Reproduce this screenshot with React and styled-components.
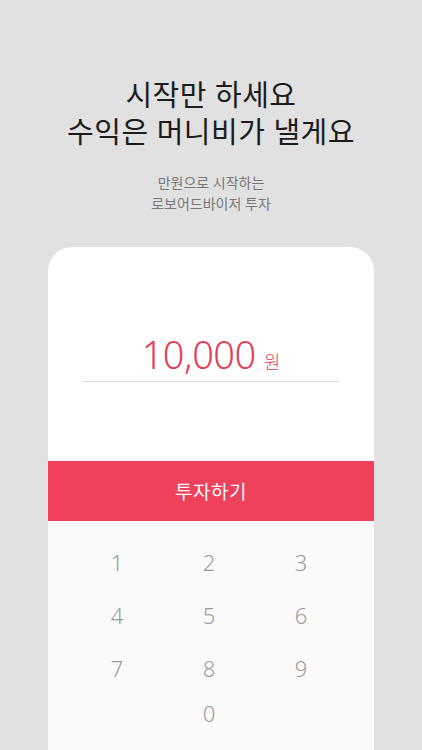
import React from 'react';
import styled, { createGlobalStyle } from 'styled-components';

const GlobalStyle = createGlobalStyle`
  html, body {
    margin: 0;
    padding: 0;
    background: #e1e1e1;
    font-family: "Noto Sans", "Noto Sans CJK KR", sans-serif;
  }
`;

const Screen = styled.div`
  width: 422px;
  height: 750px;
  overflow: hidden;
  background: #e1e1e1;
  display: flex;
  flex-direction: column;
  align-items: center;
`;

const Headline = styled.h1`
  margin: 76px 0 0;
  font-size: 29px;
  font-weight: 400;
  line-height: 37px;
  color: #1c1c1c;
  text-align: center;
  letter-spacing: 0.5px;
`;

const Sub = styled.p`
  margin: 22px 0 0;
  font-size: 14px;
  line-height: 21px;
  color: #777;
  text-align: center;
`;

const Card = styled.div`
  margin-top: 33px;
  width: 326px;
  flex: 1;
  background: #fff;
  border-radius: 24px 24px 0 0;
  display: flex;
  flex-direction: column;
  overflow: hidden;
`;

const AmountArea = styled.div`
  height: 214px;
  display: flex;
  flex-direction: column;
  align-items: center;
  padding-top: 84px;
  box-sizing: border-box;
`;

const AmountRow = styled.div`
  width: 256px;
  display: flex;
  justify-content: center;
  align-items: baseline;
  gap: 8px;
  color: #e2405a;
  border-bottom: 1.5px solid #dcdcdc;
  padding-bottom: 4px;
`;

const Amount = styled.span`
  font-size: 38px;
  font-weight: 300;
  line-height: 46px;
  letter-spacing: -0.5px;
`;

const Unit = styled.span`
  font-size: 18px;
  font-weight: 300;
`;

const InvestButton = styled.button`
  height: 60px;
  border: 0;
  background: #ef405c;
  color: #fff;
  font-family: inherit;
  font-size: 19px;
  font-weight: 400;
  letter-spacing: 0.5px;
`;

const Keypad = styled.div`
  flex: 1;
  background: #fafafa;
  display: grid;
  grid-template-columns: 1fr 1fr 1fr;
  grid-auto-rows: 53px;
  padding: 14px 27px 0 23px;
  align-content: start;
`;

const Key = styled.div`
  display: flex;
  align-items: center;
  justify-content: center;
  font-size: 22px;
  font-weight: 300;
  color: #9a9a9a;
  grid-column: ${p => p.col || 'auto'};
  height: ${p => (p.short ? '38px' : 'auto')};
`;

const keys = ['1', '2', '3', '4', '5', '6', '7', '8', '9'];

export default function App() {
  return (
    <Screen>
      <GlobalStyle />
      <Headline>
        시작만 하세요
        <br />
        수익은 머니비가 낼게요
      </Headline>
      <Sub>
        만원으로 시작하는
        <br />
        로보어드바이저 투자
      </Sub>
      <Card>
        <AmountArea>
          <AmountRow>
            <Amount>10,000</Amount>
            <Unit>원</Unit>
          </AmountRow>
        </AmountArea>
        <InvestButton>투자하기</InvestButton>
        <Keypad>
          {keys.map(k => (
            <Key key={k}>{k}</Key>
          ))}
          <Key col="2" short>0</Key>
        </Keypad>
      </Card>
    </Screen>
  );
}
